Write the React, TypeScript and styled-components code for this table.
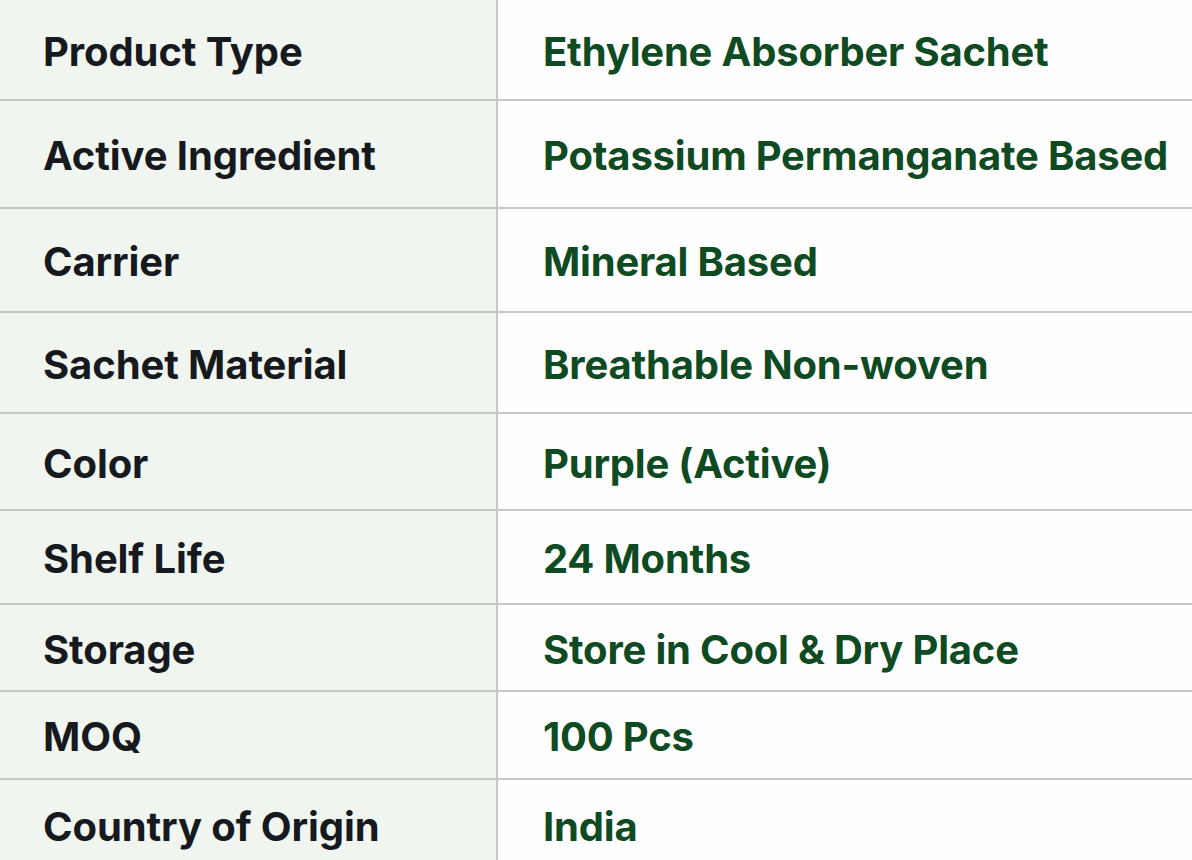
import styled, { createGlobalStyle } from 'styled-components';

const GlobalStyle = createGlobalStyle`
  html, body {
    margin: 0;
    padding: 0;
    background: #ffffff;
  }
  body {
    font-family: Inter, "Noto Sans", "Liberation Sans", sans-serif;
  }
`;

const Table = styled.div`
  width: 1192px;
  height: 860px;
  overflow: hidden;
  display: flex;
  flex-direction: column;
`;

const Row = styled.div<{ $h: number; $last?: boolean }>`
  display: grid;
  grid-template-columns: 498px 1fr;
  height: ${({ $h }) => $h}px;
  flex-shrink: 0;
  border-bottom: ${({ $last }) => ($last ? 'none' : '2px solid #c3c7c6')};
  box-sizing: border-box;
`;

const LabelCell = styled.div`
  display: flex;
  align-items: center;
  padding: 3px 0 0 43px;
  background: #f1f5f0;
  border-right: 2px solid #c3c7c6;
  font-size: 40px;
  font-weight: 700;
  color: #16191d;
  letter-spacing: -0.1px;
`;

const ValueCell = styled.div`
  display: flex;
  align-items: center;
  padding: 3px 0 0 45px;
  background: #fefefe;
  font-size: 40px;
  font-weight: 700;
  color: #0e4a22;
  letter-spacing: -0.2px;
  white-space: nowrap;
`;

const specs = [
  { label: 'Product Type', value: 'Ethylene Absorber Sachet', h: 101 },
  { label: 'Active Ingredient', value: 'Potassium Permanganate Based', h: 108 },
  { label: 'Carrier', value: 'Mineral Based', h: 104 },
  { label: 'Sachet Material', value: 'Breathable Non-woven', h: 101 },
  { label: 'Color', value: 'Purple (Active)', h: 97 },
  { label: 'Shelf Life', value: '24 Months', h: 94 },
  { label: 'Storage', value: 'Store in Cool & Dry Place', h: 87 },
  { label: 'MOQ', value: '100 Pcs', h: 88 },
  { label: 'Country of Origin', value: 'India', h: 90 },
];

export default function App() {
  return (
    <>
      <GlobalStyle />
      <Table>
        {specs.map((s, i) => (
          <Row key={s.label} $h={s.h} $last={i === specs.length - 1}>
            <LabelCell>{s.label}</LabelCell>
            <ValueCell>{s.value}</ValueCell>
          </Row>
        ))}
      </Table>
    </>
  );
}
